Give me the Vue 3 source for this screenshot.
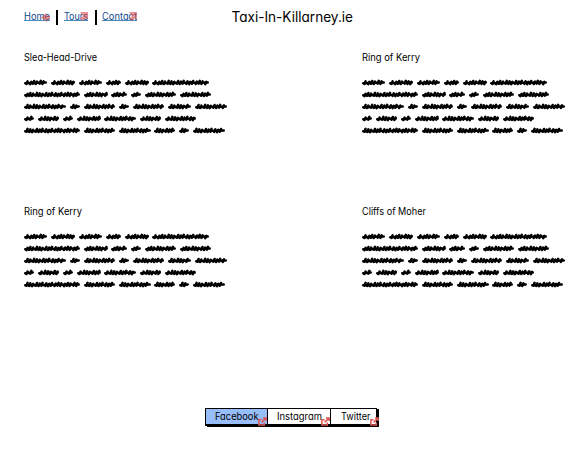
<script setup>
const links = [
  { label: 'Home', width: 26 },
  { label: 'Tours', width: 24 },
  { label: 'Contact', width: 35 },
]
const tours = [
  { name: 'Slea-Head-Drive', width: 73 },
  { name: 'Ring of Kerry', width: 58 },
  { name: 'Ring of Kerry', width: 58 },
  { name: 'Cliffs of Moher', width: 64 },
]
const socials = [
  { name: 'Facebook', width: 43.5 },
  { name: 'Instagram', width: 45 },
  { name: 'Twitter', width: 29.5 },
]

// Start and end of every scribbled word, line by line.
const lines = [
  [[0, 23], [27, 51], [55, 78], [82, 97], [101, 125], [128, 185]],
  [[0, 56], [60, 84], [87, 103], [107, 117], [121, 152], [156, 187]],
  [[0, 42], [46, 56], [60, 91], [95, 105], [109, 140], [144, 167], [171, 203]],
  [[0, 10], [14, 35], [39, 49], [53, 77], [80, 112], [116, 137], [141, 172]],
  [[0, 56], [60, 91], [95, 127], [130, 151], [155, 165], [169, 201]],
]
const lean = [0, 0.5, -0.3, 0.3, -0.5]
let baseline = ''
let ticks = ''
lines.forEach((words, row) => {
  const y = 6.6 + row * 12
  for (const [a, b] of words) {
    baseline += `M${a + 1.3} ${y + 0.6}L${b - 1.3} ${y - 0.1}`
    for (let x = a + 3, i = row; x < b - 1.5; x += i % 3 ? 2.8 : 3.8, i++) {
      const shift = lean[i % 5]
      ticks += `M${x - 0.6} ${y + 1.3 + shift / 2}L${x + 0.6} ${y - 1.3 + shift}`
    }
  }
})
</script>

<template>
  <main class="page">
    <header class="header">
      <nav class="nav">
        <a v-for="(link, i) in links" :key="link.label" class="link" :class="`link-${i}`">
          <svg class="text" :width="link.width" height="16"><text x="0" y="11" :textLength="link.width" lengthAdjust="spacingAndGlyphs">{{ link.label }}</text><path class="underline" :d="`M0 11.5H${link.width}`" /></svg>
          <svg v-if="i === 0" class="mark" viewBox="0 0 9 9"><path d="M0 4.5L5 0V2L9 3V6L6 7V9Z" /></svg>
          <svg v-else class="mark" viewBox="0 0 9 9"><path d="M0 0H8V8L6 6L3 9L0 7L3 4Z" /></svg>
        </a>
      </nav>
      <h1 class="title"><svg width="130" height="22"><text x="2.5" y="14.5" textLength="121.5" lengthAdjust="spacingAndGlyphs">Taxi-In-Killarney.ie</text></svg></h1>
    </header>
    <section class="tours">
      <article v-for="(tour, i) in tours" :key="i" class="tour">
        <h2 class="name"><svg class="text" width="90" height="16"><text x="0" y="11" :textLength="tour.width" lengthAdjust="spacingAndGlyphs">{{ tour.name }}</text></svg></h2>
        <svg class="scribble" width="205" height="62"><path class="baseline" :d="baseline" /><path class="ticks" :d="ticks" /></svg>
      </article>
    </section>
    <footer class="footer">
      <div class="bar">
        <button v-for="(social, i) in socials" :key="social.name" class="tab" :class="[`tab-${i}`, { active: i === 0 }]">
          <svg class="text" :width="social.width" height="14"><text x="0" y="10.5" :textLength="social.width" lengthAdjust="spacingAndGlyphs">{{ social.name }}</text></svg>
          <svg class="out" viewBox="0 0 10 10"><path d="M4 3H1V9H7V6M5.5 1H9V4.5M9 1L4 6" /></svg>
        </button>
      </div>
    </footer>
  </main>
</template>

<style>
body { margin: 0; background: #fff; }
</style>

<style scoped>
.page { box-sizing: border-box; width: 585px; height: 451px; overflow: hidden; font-family: Inter, "Open Sans", sans-serif; font-feature-settings: "cv11" 1; color: #000; }
.text { display: block; overflow: visible; }
text { fill: currentColor; }
.header { display: flex; height: 50px; }
.nav { display: flex; align-items: flex-start; padding: 9px 0 0 24px; width: 205px; box-sizing: border-box; }
.link { position: relative; box-sizing: border-box; height: 16px; font-size: 10px; color: #104a8f; }
.link-0 { width: 40px; }
.link-1 { width: 38px; }
.link-2 { width: 36px; }
.underline { stroke: #4a8dbd; stroke-width: 1; }
.link-0::after, .link-1::after { content: ""; position: absolute; top: 1px; height: 15px; width: 2px; background: #000; }
.link-0::after { left: 32px; }
.link-1::after { left: 31px; }
.mark { position: absolute; top: 3px; width: 9px; height: 9px; fill: #dc4f4f; opacity: .6; }
.link-0 .mark { left: 17px; top: 4px; }
.link-1 .mark { left: 16px; }
.link-2 .mark { left: 27px; }
.title { margin: 7px 0 0 24px; height: 22px; font-size: 14px; font-weight: 400; }
.tours { display: grid; grid-template-columns: 338px 223px; grid-template-rows: 154px 154px; padding-left: 24px; }
.name { margin: 0; height: 26px; font-size: 10px; font-weight: 400; }
.scribble { display: block; }
.scribble path { fill: none; stroke: #000; stroke-linecap: round; }
.baseline { stroke-width: 2.6; }
.ticks { stroke-width: 2.5; }
.footer { display: flex; padding: 50px 0 0 205px; }
.bar { display: flex; box-sizing: border-box; width: 172px; height: 18px; border: 1px solid #000; border-bottom-width: 2px; box-shadow: 2px 1px 0 #000; }
.tab { position: relative; display: flex; align-items: flex-start; box-sizing: border-box; margin: 0; padding: 0 0 0 9px; border: 0; border-right: 1.5px solid #000; background: #fff; color: #000; font-family: inherit; font-size: 10px; font-feature-settings: inherit; }
.tab-0 { width: 62px; }
.tab-1 { width: 63px; }
.tab-2 { width: 45px; padding-left: 10px; border-right: 0; }
.active { background: #97bdfb; }
.out { position: absolute; right: 0; bottom: -2px; width: 9px; height: 9px; fill: none; stroke: #d95757; stroke-width: 1.7; }
.tab-2 .out { right: -3px; }
</style>
